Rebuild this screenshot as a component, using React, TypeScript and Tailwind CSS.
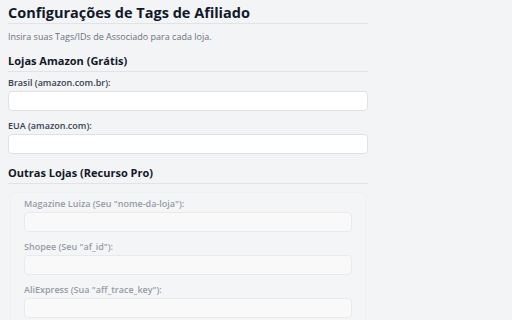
import React from 'react';

const font = { fontFamily: '"Open Sans", "Noto Sans", sans-serif' };

function Field({ label }: { label: string }) {
  return (
    <div className="flex flex-col">
      <label className="text-[9px] leading-[10px] font-semibold text-[#374151]">{label}</label>
      <input
        type="text"
        className="mt-[3px] h-[20px] w-full rounded-[4px] border border-[#dfe1e5] bg-white px-2 text-[9px] outline-none"
      />
    </div>
  );
}

export default function App() {
  return (
    <div className="min-h-[320px] w-full overflow-hidden bg-[#f3f4f6] text-[#111827]" style={font}>
      <div className="w-[360px] ml-[8px] pt-[4px]">
        <h1 className="text-[14.5px] leading-[18px] font-bold pb-[1px] border-b border-[#e1e3e6]">
          Configurações de Tags de Afiliado
        </h1>
        <p className="mt-[7px] text-[9px] leading-[12px] text-[#6b7280]">
          Insira suas Tags/IDs de Associado para cada loja.
        </p>

        <h2 className="mt-[11px] text-[11px] leading-[14px] font-bold pb-[3px] border-b border-[#e1e3e6]">
          Lojas Amazon (Grátis)
        </h2>
        <div className="mt-[6px] flex flex-col gap-[10px]">
          <Field label="Brasil (amazon.com.br):" />
          <Field label="EUA (amazon.com):" />
        </div>

        <h2 className="mt-[12px] text-[11px] leading-[14px] font-bold pb-[3px] border-b border-[#e1e3e6]">
          Outras Lojas (Recurso Pro)
        </h2>
        <div className="mt-[8px] mx-[2px] h-[140px] rounded-[6px] border border-[#eceef1] bg-[#f6f7f9] px-[13px] pt-[6px] opacity-50">
          <div className="flex flex-col gap-[10px]">
            <Field label='Magazine Luiza (Seu "nome-da-loja"):' />
            <Field label='Shopee (Seu "af_id"):' />
            <Field label='AliExpress (Sua "aff_trace_key"):' />
          </div>
        </div>
      </div>
    </div>
  );
}
